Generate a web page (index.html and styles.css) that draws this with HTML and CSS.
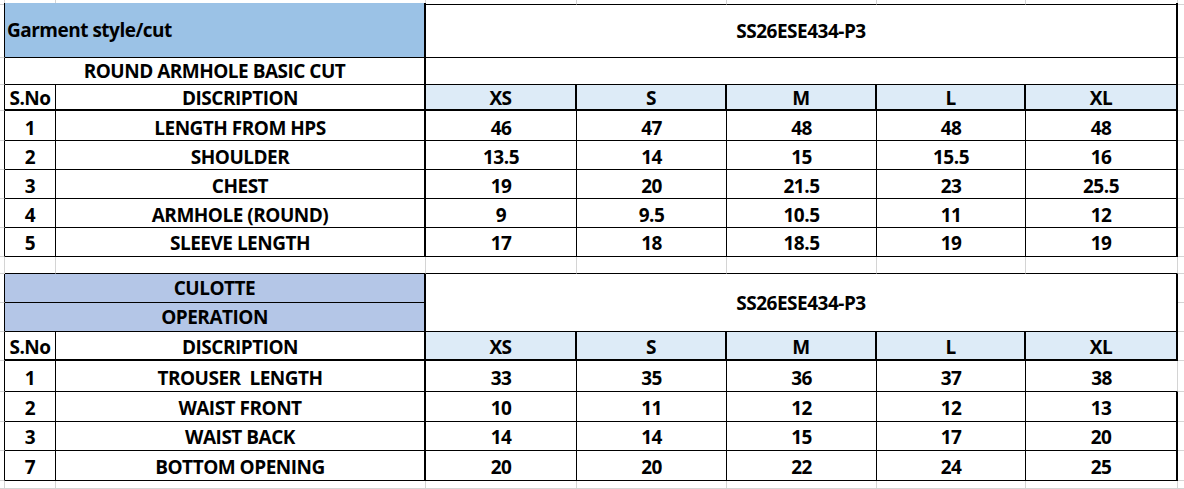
FILE: index.html
```html
<!DOCTYPE html>
<html>
<head>
<meta charset="utf-8">
<link rel="stylesheet" href="styles.css">
</head>
<body>
<div class="sheet">
  <!-- r0 -->
  <div class="c"></div><div class="c topb"></div><div class="c topb"></div><div class="c topb"></div><div class="c topb"></div><div class="c topb"></div><div class="c topb"></div><div class="c topb"></div><div class="c edge"></div>
  <!-- r1 -->
  <div class="c a"></div>
  <div class="c s2 bk tr title">Garment style/cut</div>
  <div class="c s5 bk tr mid">SS26ESE434-P3</div>
  <div class="c edge"></div>
  <!-- r2 -->
  <div class="c a"></div>
  <div class="c s2 bk tr p1">ROUND ARMHOLE BASIC CUT</div>
  <div class="c s5 bk tr"></div>
  <div class="c edge"></div>
  <!-- r3 -->
  <div class="c a"></div>
  <div class="c bk tb ph">S.No</div>
  <div class="c bk tb tr ph">DISCRIPTION</div>
  <div class="c bk tb tr hd ph">XS</div>
  <div class="c bk tb tr hd ph">S</div>
  <div class="c bk tb tr hd ph">M</div>
  <div class="c bk tb tr hd ph">L</div>
  <div class="c bk tb tr hd ph">XL</div>
  <div class="c edge"></div>
  <!-- d1 -->
  <div class="c a"></div>
  <div class="c bk p5">1</div><div class="c bk tr p5">LENGTH FROM HPS</div>
  <div class="c bk p5">46</div><div class="c bk p5">47</div><div class="c bk p5">48</div><div class="c bk p5">48</div><div class="c bk tr p5">48</div>
  <div class="c edge"></div>
  <!-- d2 -->
  <div class="c a"></div>
  <div class="c bk">2</div><div class="c bk tr">SHOULDER</div>
  <div class="c bk">13.5</div><div class="c bk">14</div><div class="c bk">15</div><div class="c bk">15.5</div><div class="c bk tr">16</div>
  <div class="c edge"></div>
  <!-- d3 -->
  <div class="c a"></div>
  <div class="c bk">3</div><div class="c bk tr">CHEST</div>
  <div class="c bk">19</div><div class="c bk">20</div><div class="c bk">21.5</div><div class="c bk">23</div><div class="c bk tr">25.5</div>
  <div class="c edge"></div>
  <!-- d4 -->
  <div class="c a"></div>
  <div class="c bk">4</div><div class="c bk tr">ARMHOLE (ROUND)</div>
  <div class="c bk">9</div><div class="c bk">9.5</div><div class="c bk">10.5</div><div class="c bk">11</div><div class="c bk tr">12</div>
  <div class="c edge"></div>
  <!-- d5 -->
  <div class="c a"></div>
  <div class="c bk p3">5</div><div class="c bk tr p3">SLEEVE LENGTH</div>
  <div class="c bk p3">17</div><div class="c bk p3">18</div><div class="c bk p3">18.5</div><div class="c bk p3">19</div><div class="c bk tr p3">19</div>
  <div class="c edge"></div>
  <!-- empty -->
  <div class="c"></div><div class="c topb"></div><div class="c topb"></div><div class="c topb"></div><div class="c topb"></div><div class="c topb"></div><div class="c topb"></div><div class="c topb"></div><div class="c edge"></div>
  <!-- c1 -->
  <div class="c a"></div>
  <div class="c s2 bk tr group p0">CULOTTE</div>
  <div class="c s5 r2 bk tr p1">SS26ESE434-P3</div>
  <div class="c edge"></div>
  <!-- c2 -->
  <div class="c a"></div>
  <div class="c s2 bk tr group p0">OPERATION</div>
  <div class="c edge"></div>
  <!-- h2 -->
  <div class="c a"></div>
  <div class="c bk tb ph">S.No</div>
  <div class="c bk tb tr ph">DISCRIPTION</div>
  <div class="c bk tb tr hd ph">XS</div>
  <div class="c bk tb tr hd ph">S</div>
  <div class="c bk tb tr hd ph">M</div>
  <div class="c bk tb tr hd ph">L</div>
  <div class="c bk tb tr hd ph">XL</div>
  <div class="c edge"></div>
  <!-- t1 -->
  <div class="c a"></div>
  <div class="c bk">1</div><div class="c bk tr">TROUSER&nbsp; LENGTH</div>
  <div class="c bk">33</div><div class="c bk">35</div><div class="c bk">36</div><div class="c bk">37</div><div class="c bk open">38</div>
  <div class="c edge"></div>
  <!-- t2 -->
  <div class="c a"></div>
  <div class="c bk p3">2</div><div class="c bk tr p3">WAIST FRONT</div>
  <div class="c bk p3">10</div><div class="c bk p3">11</div><div class="c bk p3">12</div><div class="c bk p3">12</div><div class="c bk tr p3">13</div>
  <div class="c edge"></div>
  <!-- t3 -->
  <div class="c a"></div>
  <div class="c bk p3">3</div><div class="c bk tr p3">WAIST BACK</div>
  <div class="c bk p3">14</div><div class="c bk p3">14</div><div class="c bk p3">15</div><div class="c bk p3">17</div><div class="c bk tr p3">20</div>
  <div class="c edge"></div>
  <!-- t4 -->
  <div class="c a"></div>
  <div class="c bk p3">7</div><div class="c bk tr p3">BOTTOM OPENING</div>
  <div class="c bk p3">20</div><div class="c bk p3">20</div><div class="c bk p3">22</div><div class="c bk p3">24</div><div class="c bk tr p3">25</div>
  <div class="c edge"></div>
  <!-- rest -->
  <div class="c"></div><div class="c"></div><div class="c"></div><div class="c"></div><div class="c"></div><div class="c"></div><div class="c"></div><div class="c"></div><div class="c edge"></div>
</div>
</body>
</html>
```

FILE: styles.css
```css
html, body {
  margin: 0;
  padding: 0;
  background: #ffffff;
}

.sheet {
  --grid: #d4d4d4;
  display: grid;
  grid-template-columns: 5px 51px 370px 151px 150px 150px 149px 152px 1fr;
  grid-template-rows: 3px 55px 27px 26px 30px 29px 29px 29px 29px 17px 29px 29px 29px 31px 30px 29px 30px 1fr;
  height: 489px;
  width: 1184px;
  overflow: hidden;
  font-family: "Open Sans", "Liberation Sans", sans-serif;
  font-weight: 700;
  font-size: 19px;
  letter-spacing: -0.5px;
  line-height: 1;
  color: #000000;
}

.c {
  box-sizing: border-box;
  border-right: 1px solid var(--grid);
  border-bottom: 1px solid var(--grid);
  display: flex;
  align-items: center;
  justify-content: center;
  padding-top: 4px;
  white-space: nowrap;
  overflow: hidden;
  min-width: 0;
  min-height: 0;
}

.edge { border-right: none; }

.a { border-right-color: #000000; }

.topb { border-bottom-color: #000000; }

.bk {
  border-right-color: #000000;
  border-bottom-color: #000000;
}

.tr { border-right-width: 2px; }
.tb { border-bottom-width: 2px; }

.open { border-right-color: var(--grid); }

.s2 { grid-column: span 2; }
.s5 { grid-column: span 5; }
.r2 { grid-row: span 2; }

.title {
  background: #9bc2e6;
  justify-content: flex-start;
  padding-left: 2px;
  padding-top: 1px;
}

.mid { padding-top: 2px; }

.group { background: #b4c6e7; }

.hd { background: #ddebf7; }

.p0 { padding-top: 0; }
.p1 { padding-top: 1px; }
.p3 { padding-top: 3px; }
.p5 { padding-top: 5px; }
.ph { padding-top: 3px; }
```
